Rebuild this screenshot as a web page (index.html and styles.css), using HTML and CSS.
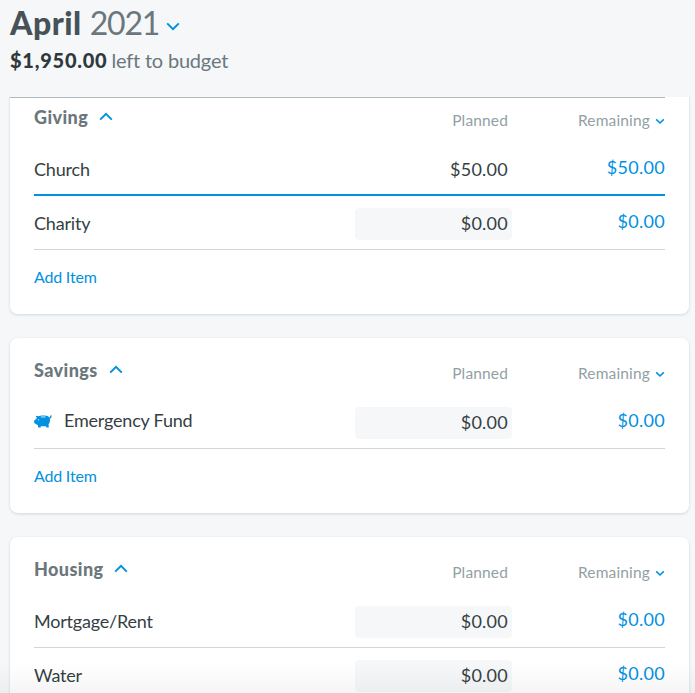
FILE: index.html
```html
<!DOCTYPE html>
<html lang="en">
    <head>
        <meta charset="utf-8">
        <meta name="viewport" content="width=device-width,initial-scale=1">
        <title>April 2021 Budget</title>
        <link rel="stylesheet" href="styles.css">
    </head>
<body>
    <div class="budget">
        <header class="budget-header">
            <h1 class="month"><strong>April</strong> <span class="year">2021</span>
                <svg class="month-arrow" width="14" height="9" viewBox="0 0 14 9"><path d="M1.2 1.4 7 7.1l5.8-5.7"/></svg>
            </h1>
            <p class="left-over"><strong>$1,950.00</strong> <span>left to budget</span></p>
        </header>
        <main class="groups">
            <section class="card">
                <div class="card-header">
                    <h2 class="title">Giving</h2>
                    <svg class="toggle" width="14" height="9" viewBox="0 0 14 9"><path d="M1.2 7.6 7 1.9l5.8 5.7"/></svg>
                    <span class="planned-label">Planned</span>
                    <span class="remaining-label">Remaining</span>
                    <svg class="sort" width="10" height="7" viewBox="0 0 10 7"><path d="M1.2 1.4 5 5l3.8-3.6"/></svg>
                </div>
                <div class="row funded">
                    <span class="name">Church</span>
                    <span class="planned">$50.00</span>
                    <span class="remaining">$50.00</span>
                </div>
                <div class="row">
                    <span class="name">Charity</span>
                    <span class="planned field">$0.00</span>
                    <span class="remaining">$0.00</span>
                </div>
                <a class="add">Add Item</a>
            </section>
            <section class="card">
                <div class="card-header">
                    <h2 class="title">Savings</h2>
                    <svg class="toggle" width="14" height="9" viewBox="0 0 14 9"><path d="M1.2 7.6 7 1.9l5.8 5.7"/></svg>
                    <span class="planned-label">Planned</span>
                    <span class="remaining-label">Remaining</span>
                    <svg class="sort" width="10" height="7" viewBox="0 0 10 7"><path d="M1.2 1.4 5 5l3.8-3.6"/></svg>
                </div>
                <div class="row">
                    <span class="name fund">
                        <svg class="piggy" width="18" height="13" viewBox="0 0 18 13">
                            <path d="M1.7.7 4.4 1.3C5.6.6 7 .5 8.8.5h2c2.1 0 3.7.8 4.6 2 .9.1 1-.3.7-.9-.3-.8.3-1.3.9-.9.3-.3.7-.4.8-.1.2.4-.1.8-.4.9.1 1.2-.5 2-1.5 2.1.3 2.7-.3 4.4-1.3 5.7l.2 3.2h-2.4l-.4-1.3H6.9l-.4 1.3H4.2L3.9 10.3 1.8 8.9.2 8V5.2l1.4-.6L2.8 3z"/>
                            <path class="slot" d="M6.8 2.1c1.6-.4 3.3-.4 4.7 0"/>
                            <circle class="eye" cx="4.4" cy="4.8" r=".6"/>
                        </svg>
                        <span>Emergency Fund</span>
                    </span>
                    <span class="planned field">$0.00</span>
                    <span class="remaining">$0.00</span>
                </div>
                <a class="add">Add Item</a>
            </section>
            <section class="card">
                <div class="card-header">
                    <h2 class="title">Housing</h2>
                    <svg class="toggle" width="14" height="9" viewBox="0 0 14 9"><path d="M1.2 7.6 7 1.9l5.8 5.7"/></svg>
                    <span class="planned-label">Planned</span>
                    <span class="remaining-label">Remaining</span>
                    <svg class="sort" width="10" height="7" viewBox="0 0 10 7"><path d="M1.2 1.4 5 5l3.8-3.6"/></svg>
                </div>
                <div class="row">
                    <span class="name">Mortgage/Rent</span>
                    <span class="planned field">$0.00</span>
                    <span class="remaining">$0.00</span>
                </div>
                <div class="row">
                    <span class="name">Water</span>
                    <span class="planned field">$0.00</span>
                    <span class="remaining">$0.00</span>
                </div>
            </section>
        </main>
    </div>
</body>
</html>
```
FILE: styles.css
```css
* {
    box-sizing: border-box;
}

body {
    margin: 0;
    background: #f5f7f9;
    color: #353f43;
    font-family: Lato, "Open Sans", sans-serif;
    font-size: 18px;
}

h1, h2, p {
    margin: 0;
}

svg {
    flex: none;
    fill: none;
    stroke: #0091e1;
    stroke-width: 2;
}

.budget {
    display: flex;
    flex-direction: column;
    height: 100vh;
    overflow: hidden;
    position: relative;
}

/* fade where the list runs off the window */
.budget:after {
    content: "";
    position: absolute;
    left: 0;
    right: 0;
    bottom: 0;
    height: 30px;
    background: linear-gradient(rgba(0, 0, 0, 0), rgba(0, 0, 0, 0.04));
}

.budget-header {
    flex: none;
    height: 97px;
    padding: 3px 10px 0;
}

.month {
    display: flex;
    align-items: center;
    height: 40px;
    font-size: 32px;
    line-height: 40px;
    color: #465257;
}

.month strong {
    font-weight: 900;
    letter-spacing: 0.5px;
}

.year {
    margin-left: 8px;
    font-weight: 400;
    letter-spacing: -1.2px;
    color: #6b777c;
}

.month-arrow {
    margin: 6px 0 0 7px;
}

.left-over {
    display: flex;
    gap: 4px;
    font-size: 20px;
    line-height: 34px;
    letter-spacing: -0.2px;
    color: #6b777c;
}

.left-over strong {
    font-weight: 900;
    letter-spacing: 0.75px;
    color: #2f383c;
}

.groups {
    flex: 1;
    min-height: 0;
    padding: 0 6px 0 10px;
    overflow: hidden;
    position: relative;
}

.groups:before {
    content: "";
    position: absolute;
    top: 0;
    left: 10px;
    right: 30px;
    height: 1px;
    background: #b0b9be;
}

.card {
    padding: 0 24px;
    margin-bottom: 24px;
    background: #fff;
    border-radius: 8px;
    box-shadow: 0 1px 3px rgba(50, 65, 75, 0.17);
}

.card:first-child {
    margin-top: -12px;
}

.card-header {
    display: flex;
    height: 57px;
}

.title {
    padding-top: 20px;
    font-size: 18px;
    line-height: 24px;
    font-weight: 900;
    letter-spacing: 0.4px;
    color: #6b777c;
}

.toggle {
    margin: 27px 0 0 11px;
}

.planned-label, .remaining-label {
    padding-top: 24px;
    font-size: 15.5px;
    line-height: 22px;
    letter-spacing: 0.15px;
    color: #939fa4;
}

.planned-label {
    margin-left: auto;
    margin-right: 70px;
}

.sort {
    margin: 33px 0 0 5px;
    stroke-width: 1.6;
}

.row {
    display: flex;
    height: 54px;
    border-bottom: 1px solid #d0d5d7;
}

.funded {
    border-bottom: 2px solid #0091e1;
}

.name {
    flex: 1;
    padding-top: 15px;
    line-height: 24px;
    letter-spacing: -0.2px;
}

.planned {
    width: 157px;
    height: 32px;
    margin-top: 12px;
    padding-right: 4px;
    border-radius: 4px;
    line-height: 30px;
    letter-spacing: 0.25px;
    text-align: right;
}

.field {
    background: #f5f7f9;
}

.remaining {
    width: 153px;
    padding-top: 13px;
    line-height: 24px;
    letter-spacing: 0.3px;
    text-align: right;
    color: #0091e1;
}

.fund {
    display: flex;
    gap: 12px;
    padding-top: 13px;
}

.piggy {
    margin-top: 7px;
    fill: #0091e1;
    stroke: none;
}

.slot {
    fill: none;
    stroke: #fff;
    stroke-width: 0.8;
}

.eye {
    fill: #fff;
}

.add {
    display: block;
    height: 64px;
    padding-top: 16px;
    font-size: 16px;
    line-height: 22px;
    letter-spacing: -0.2px;
    color: #0091e1;
}
```
